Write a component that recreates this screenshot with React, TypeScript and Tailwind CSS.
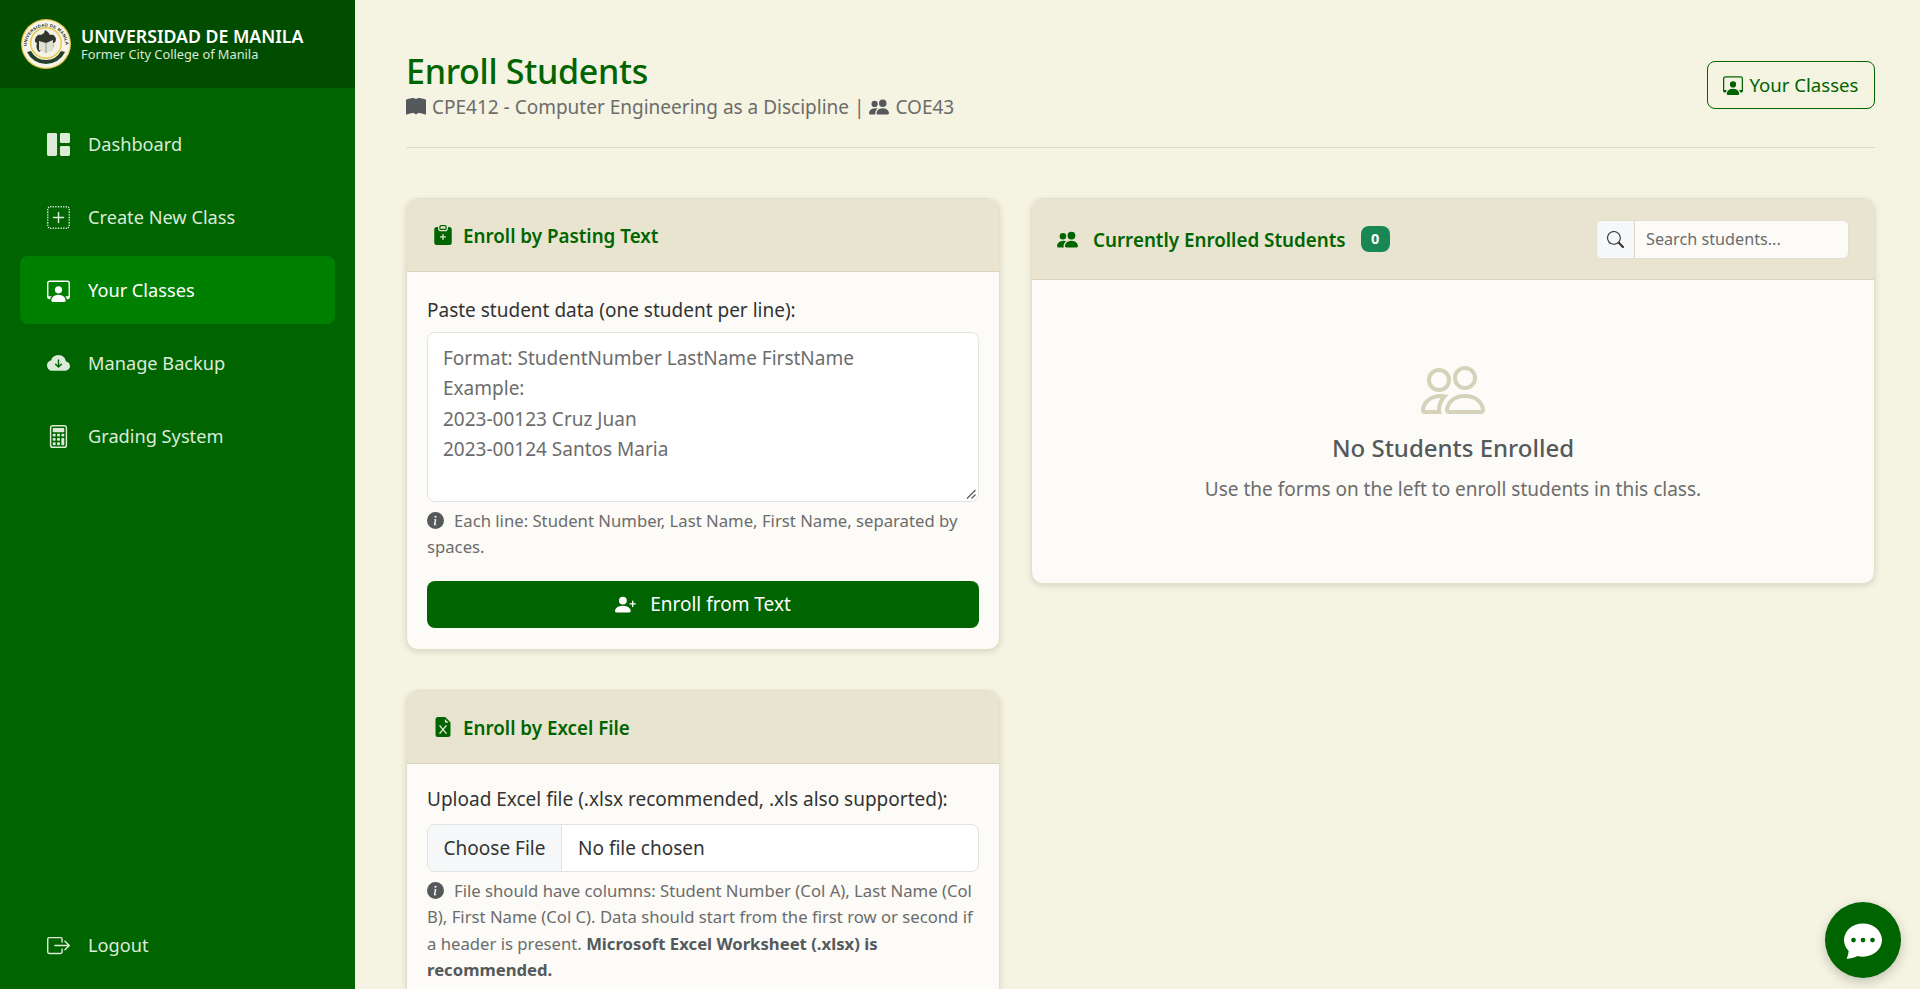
import {
  BsGrid1X2Fill, BsPlusSquareDotted, BsPersonWorkspace, BsCloudArrowDownFill, BsCalculator,
  BsBoxArrowRight, BsBookFill, BsPeopleFill, BsClipboardPlusFill, BsFileEarmarkExcelFill,
  BsInfoCircleFill, BsPersonPlusFill, BsSearch, BsPeople, BsChatDotsFill,
} from 'react-icons/bs'

const navItems = [
  { label: 'Dashboard', icon: BsGrid1X2Fill },
  { label: 'Create New Class', icon: BsPlusSquareDotted },
  { label: 'Your Classes', icon: BsPersonWorkspace, active: true },
  { label: 'Manage Backup', icon: BsCloudArrowDownFill },
  { label: 'Grading System', icon: BsCalculator },
]

/* Sceau de l'université, dessiné à la main */
function Seal() {
  return (
    <svg viewBox="0 0 50 50" className="w-[50px] h-[50px] shrink-0">
      <defs>
        <path id="seal-arc" d="M5.5 27a19.5 19.5 0 0 1 39 0" />
      </defs>
      <circle cx="25" cy="25" r="25" fill="#e9c545" />
      <circle cx="25" cy="25" r="23.8" fill="#f7f5e8" />
      <text fontSize="4.3" fontWeight="700" fill="#2a2f25" fontFamily="Liberation Sans, sans-serif" textLength="60">
        <textPath href="#seal-arc">UNIVERSIDAD DE MANILA</textPath>
      </text>
      <path d="M6 33a21 21 0 0 0 38 0l-4-1a17 17 0 0 1-30 0z" fill="#24402a" />
      <circle cx="25" cy="24" r="16" fill="#e9c545" />
      <circle cx="25" cy="24" r="14.6" fill="#f4f2e4" />
      <path d="M14 22c0-4 3-7 6-6l3-2 1-3 3 2 2 3c3-1 6 1 6 5-1 3-2 3-3 3 1 3 0 6-2 8l-2-2-3-1-4 2-3 2c-3-3-3-6-2-9-1 0-2-1-2-2z" fill="#30352e" />
      <path d="M18 22l7 2 7-3v10l-7 3-7-3z" fill="#dfe0d4" />
      <path d="M25 24v10" stroke="#666" strokeWidth="0.6" />
    </svg>
  )
}

function Card({ icon: Icon, title, children }: { icon: typeof BsPeople; title: string; children: React.ReactNode }) {
  return (
    <section className="rounded-xl bg-[#fcfbf7] shadow-[0_2px_6px_rgba(0,0,0,0.12)] border border-[#e4dfca] overflow-hidden shrink-0">
      <header className="h-[73px] bg-[#e9e4d0] border-b border-[#dbd5bd] flex items-center pl-[26px] text-[#006400]">
        <Icon className="w-[20px] h-[20px]" />
        <h2 className="ml-[10px] text-[18.8px] font-semibold pt-[2px]">{title}</h2>
      </header>
      <div className="px-[20px] pt-[24px] pb-[21px]">{children}</div>
    </section>
  )
}

function Hint({ children }: { children: React.ReactNode }) {
  return (
    <p className="mt-[6px] text-[16.7px] leading-[26.4px] text-[#6c6c6c]">
      <BsInfoCircleFill className="inline w-[17px] h-[17px] text-[#55595c] mr-[10px] align-[-2px]" />
      {children}
    </p>
  )
}

export default function App() {
  return (
    <div className="h-screen flex overflow-hidden relative bg-[#f5f3e1] font-['Noto_Sans',sans-serif] text-[#333]">
      <aside className="w-[355px] shrink-0 bg-[#006400] flex flex-col text-[#dcebd8]">
        <div className="h-[88px] bg-[#004d00] flex items-center pl-[21px] shrink-0">
          <Seal />
          <div className="ml-[10px] text-white">
            <div className="text-[17.7px] leading-[20px] font-semibold">UNIVERSIDAD DE MANILA</div>
            <div className="text-[12.8px] leading-[16px] text-[#dce8d8]">Former City College of Manila</div>
          </div>
        </div>
        <nav className="mt-[22px] px-[20px] flex flex-col gap-[5px]">
          {navItems.map(({ label, icon: Icon, active }) => (
            <a key={label} className={`h-[68px] flex items-center pl-[27px] rounded-lg text-[18.2px] ${active ? 'bg-[#008000] text-white' : ''}`}>
              <Icon className="w-[23px] h-[23px]" />
              <span className="ml-[18px] pt-[2px]">{label}</span>
            </a>
          ))}
        </nav>
        <a className="mt-auto mb-[10px] mx-[20px] h-[68px] flex items-center pl-[27px] text-[18.2px]">
          <BsBoxArrowRight className="w-[23px] h-[23px]" />
          <span className="ml-[18px] pt-[1px]">Logout</span>
        </a>
      </aside>

      <main className="flex-1 min-w-0 pl-[51px] pr-[45px] overflow-hidden">
        <div className="h-[148px] border-b border-[#dfdac5] flex items-start justify-between">
          <div className="pt-[48px]">
            <h1 className="text-[34px] leading-[46px] font-medium text-[#006400] tracking-[-0.3px]">Enroll Students</h1>
            <p className="text-[19px] leading-[26px] text-[#6c6c6c]">
              <BsBookFill className="inline w-[20px] h-[20px] text-[#55595c] mr-[6px] align-[-3px]" />
              CPE412 - Computer Engineering as a Discipline |{' '}
              <BsPeopleFill className="inline w-[20px] h-[20px] text-[#55595c] mr-[6px] align-[-3px]" />
              COE43
            </p>
          </div>
          <button className="mt-[61px] w-[168px] h-[48px] border border-[#006400] rounded-lg text-[#006400] flex items-center justify-center gap-[6px] text-[18.6px]">
            <BsPersonWorkspace className="w-[20px] h-[20px]" />
            Your Classes
          </button>
        </div>

        <div className="mt-[50px] grid grid-cols-[594px_844px] gap-[31px] items-start">
          <div className="flex flex-col gap-[40px]">
            <Card icon={BsClipboardPlusFill} title="Enroll by Pasting Text">
              <label className="block text-[19px] leading-[28px] mb-[8px]">Paste student data (one student per line):</label>
              <div className="relative h-[170px] bg-white border border-[#e2e2e2] rounded-lg px-[15px] pt-[10px] text-[19px] leading-[30.4px] text-[#6c6c6c]">
                <div>Format: StudentNumber LastName FirstName</div>
                <div>Example:</div>
                <div>2023-00123 Cruz Juan</div>
                <div>2023-00124 Santos Maria</div>
                <svg viewBox="0 0 10 10" className="absolute right-[2px] bottom-[2px] w-[10px] h-[10px]">
                  <path d="M1 9.5 9.5 1M5.5 9.5l4-4" stroke="#555" strokeWidth="1.1" />
                </svg>
              </div>
              <Hint>Each line: Student Number, Last Name, First Name, separated by spaces.</Hint>
              <button className="mt-[20px] w-full h-[47px] rounded-lg bg-[#006400] text-white flex items-center justify-center gap-[14px] text-[19px]">
                <BsPersonPlusFill className="w-[21px] h-[21px]" />
                Enroll from Text
              </button>
            </Card>

            <Card icon={BsFileEarmarkExcelFill} title="Enroll by Excel File">
              <label className="block text-[19px] leading-[28px] -mt-[3px] mb-[11px]">Upload Excel file (.xlsx recommended, .xls also supported):</label>
              <div className="h-[48px] bg-white border border-[#e2e2e2] rounded-lg flex items-center overflow-hidden text-[19px]">
                <span className="h-full w-[134px] bg-[#f6f7f8] border-r border-[#e2e2e2] flex items-center justify-center pt-[1px]">Choose File</span>
                <span className="ml-[16px] pt-[1px]">No file chosen</span>
              </div>
              <Hint>
                File should have columns: Student Number (Col A), Last Name (Col B), First Name (Col C). Data should start from the first row or second if a header is present.{' '}
                <strong className="font-bold text-[#55595c]">Microsoft Excel Worksheet (.xlsx) is recommended.</strong>
              </Hint>
            </Card>
          </div>

          <section className="h-[386px] rounded-xl bg-[#fcfbf7] shadow-[0_2px_6px_rgba(0,0,0,0.12)] border border-[#e4dfca] overflow-hidden flex flex-col">
            <header className="h-[81px] shrink-0 bg-[#e9e4d0] border-b border-[#dbd5bd] flex items-center pl-[25px] pr-[25px] text-[#006400]">
              <BsPeopleFill className="w-[21px] h-[21px]" />
              <h2 className="ml-[15px] text-[18.8px] font-semibold pt-[2px]">Currently Enrolled Students</h2>
              <span className="ml-[15px] w-[29px] h-[26px] rounded-lg bg-[#198754] text-white text-[14.5px] font-bold flex items-center justify-center">0</span>
              <div className="ml-auto w-[253px] h-[39px] rounded-md border border-[#e2dfd0] bg-[#fcfbf7] flex overflow-hidden">
                <span className="w-[38px] bg-[#f6f7f8] border-r border-[#dcd7c2] flex items-center justify-center text-[#333]">
                  <BsSearch className="w-[17px] h-[17px]" />
                </span>
                <span className="ml-[11px] pt-[1px] self-center text-[16.2px] text-[#6c6c6c]">Search students...</span>
              </div>
            </header>
            <div className="flex-1 flex flex-col items-center pt-[78px]">
              <BsPeople className="w-[64px] h-[64px] text-[#d6d1b9]" />
              <h3 className="mt-[10px] text-[24px] leading-[32px] font-medium text-[#55595c]">No Students Enrolled</h3>
              <p className="mt-[11px] text-[19px] leading-[28px] text-[#6c6c6c]">Use the forms on the left to enroll students in this class.</p>
            </div>
          </section>
        </div>
      </main>

      <button className="absolute right-[19px] bottom-[11px] w-[76px] h-[76px] rounded-full bg-[#006400] text-white flex items-center justify-center shadow-[0_4px_12px_rgba(0,0,0,0.2)]">
        <BsChatDotsFill className="w-[38px] h-[38px]" />
      </button>
    </div>
  )
}
